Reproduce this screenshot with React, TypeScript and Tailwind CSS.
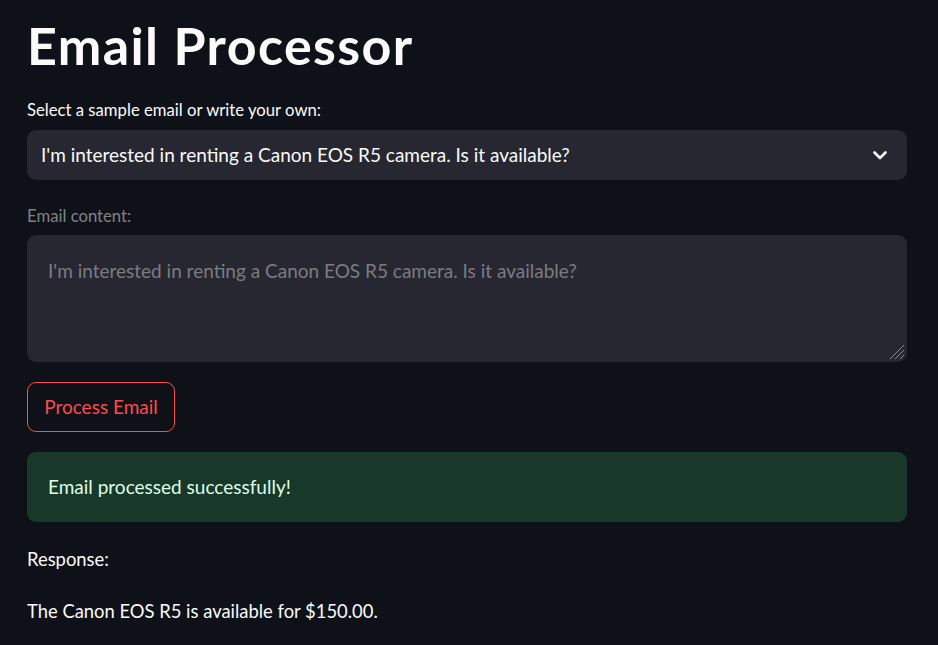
import React from "react";

export default function App() {
  const font = { fontFamily: "Lato, 'Noto Sans', sans-serif" };
  return (
    <div className="min-h-[645px] w-full bg-[#0e1117] text-[#fafafa]" style={font}>
      <div className="px-[27px] pt-[15px] w-[934px]">
        <h1 className="text-[52px] leading-[60px] font-bold tracking-[1.4px]">Email Processor</h1>
        <div className="mt-[24px] text-[16.7px] leading-[22px] text-[#fafafa]">Select a sample email or write your own:</div>
        <div className="mt-[9px] h-[50px] rounded-[9px] bg-[#262730] flex items-center pl-[14px] pr-[20px]">
          <span className="flex-1 text-[19px]">I'm interested in renting a Canon EOS R5 camera. Is it available?</span>
          <svg width="14" height="9" viewBox="0 0 14 9">
            <polyline points="1.5,1.5 7,7 12.5,1.5" fill="none" stroke="#fafafa" strokeWidth="2.6" strokeLinecap="round" strokeLinejoin="round" />
          </svg>
        </div>
        <div className="mt-[25px] text-[16.7px] leading-[22px] text-[#808288]">Email content:</div>
        <div className="relative mt-[8px] h-[127px] rounded-[9px] bg-[#262730] px-[21px] pt-[24px]">
          <div className="text-[19px] leading-[24px] text-[#7b7c82]">I'm interested in renting a Canon EOS R5 camera. Is it available?</div>
          <svg width="18" height="18" viewBox="0 0 18 18" className="absolute right-[2px] bottom-[2px]">
            <line x1="17" y1="3" x2="3" y2="17" stroke="#8a8b90" strokeWidth="1" />
            <line x1="17" y1="8" x2="8" y2="17" stroke="#8a8b90" strokeWidth="1" />
            <line x1="17" y1="13" x2="13" y2="17" stroke="#8a8b90" strokeWidth="1" />
          </svg>
        </div>
        <button className="mt-[20px] h-[50px] w-[148px] rounded-[9px] border border-[#ff4b4b] text-[#ff4b4b] text-[19px] flex items-center justify-center bg-transparent">
          Process Email
        </button>
        <div className="mt-[20px] h-[70px] rounded-[9px] bg-[#18392a] flex items-center px-[21px] text-[19px] text-[#dffde9]">
          Email processed successfully!
        </div>
        <div className="mt-[23px] text-[18.4px] leading-[28px]">Response:</div>
        <div className="mt-[24px] text-[18.4px] leading-[28px]">The Canon EOS R5 is available for $150.00.</div>
      </div>
    </div>
  );
}
